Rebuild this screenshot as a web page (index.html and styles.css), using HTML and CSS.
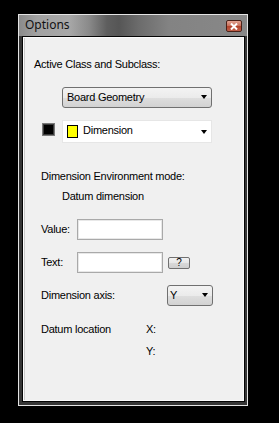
FILE: index.html
```html
<!DOCTYPE html>
<html>
<head>
<meta charset="utf-8">
<link rel="stylesheet" href="styles.css">
</head>
<body>
<div class="window">
  <div class="titlebar">
    <span class="title">Options</span>
    <span class="close"><svg width="8" height="7" viewBox="0 0 8 7"><path d="M1 0.5 L7 6.5 M7 0.5 L1 6.5" stroke="#fff" stroke-width="2"/></svg></span>
  </div>
  <div class="panel">
    <div class="content">
      <div class="label l1">Active Class and Subclass:</div>
      <div class="select select-class"><span class="sel-text">Board Geometry</span><i class="arrow"></i></div>
      <div class="row subclass-row">
        <span class="colorbox"></span>
        <div class="select select-sub"><span class="swatch"></span><span class="sub-text">Dimension</span><i class="arrow"></i></div>
      </div>
      <div class="label l2">Dimension Environment mode:</div>
      <div class="label l3">Datum dimension</div>
      <div class="row field value-row"><span class="flabel">Value:</span><span class="input"></span></div>
      <div class="row field text-row"><span class="flabel">Text:</span><span class="input"></span><span class="btn">?</span></div>
      <div class="row axis-row"><span class="alabel">Dimension axis:</span><div class="select select-axis"><span class="sel-text">Y</span><i class="arrow"></i></div></div>
      <div class="row loc-row"><span class="loclabel">Datum location</span><span>X:</span></div>
      <div class="row loc2-row"><span>Y:</span></div>
    </div>
  </div>
</div>
</body>
</html>
```
FILE: styles.css
```css
html, body {
  margin: 0;
  padding: 0;
  background: #000;
}
body {
  width: 279px;
  height: 423px;
  overflow: hidden;
  padding-top: 14px;
  box-sizing: border-box;
}
.window {
  margin-left: 18px;
  width: 230px;
  height: 392px;
  box-sizing: border-box;
  border: 1px solid #e4e4e4;
  background: #363636;
  display: flex;
  flex-direction: column;
}
.titlebar {
  height: 21px;
  flex: none;
  display: flex;
  justify-content: space-between;
  align-items: flex-start;
  padding: 0 5px 0 6px;
  background: linear-gradient(90deg, #8a8a8a 0px, #a2a2a2 18px, #a8a8a8 50px, #8a8a8a 70px, #5e5e5e 88px, #565656 100px, #6c6c6c 120px, #838383 150px, #888 100%);
}
.title {
  font-family: "Noto Sans", "Open Sans", sans-serif;
  font-size: 12px;
  line-height: 19px;
  color: #111;
}
.close {
  margin-top: 5px;
  width: 14px;
  height: 10px;
  border: 1px solid #4a2219;
  border-radius: 2px;
  background: linear-gradient(#e3a493, #c9735e 45%, #b4442c 55%, #c0604a);
  display: flex;
  align-items: center;
  justify-content: center;
}
.close svg { display: block; }
.panel {
  flex: 1;
  margin: 0 2px 3px 3px;
  border: 1px solid #050505;
  display: flex;
}
.content {
  flex: 1;
  border: 1px solid #fbfbfb;
  box-shadow: inset 1px 0 0 #c9c9c9;
  background: #f0f0f0;
  font-family: "Liberation Sans", Arial, sans-serif;
  font-size: 11px;
  letter-spacing: -0.25px;
  line-height: 13px;
  color: #000;
}
.label { height: 13px; white-space: nowrap; }
.l1 { margin-top: 20px; padding-left: 10px; }
.l2 { margin-top: 27px; padding-left: 17px; }
.l3 { margin-top: 7px; padding-left: 38px; }
.select {
  box-sizing: border-box;
  display: flex;
  align-items: center;
  justify-content: space-between;
  white-space: nowrap;
}
.arrow {
  width: 0;
  height: 0;
  border-left: 3.5px solid transparent;
  border-right: 3.5px solid transparent;
  border-top: 4px solid #000;
}
.select-class {
  margin-top: 16px;
  margin-left: 38px;
  width: 150px;
  height: 21px;
  border: 1px solid #707070;
  border-radius: 3px;
  padding: 0 4px 1px 4px;
  background: linear-gradient(#f3f3f3, #ebebeb 50%, #dedede 52%, #d2d2d2);
}
.row { display: flex; align-items: center; white-space: nowrap; }
.subclass-row {
  margin-top: 12px;
  height: 23px;
  align-items: flex-start;
  padding-left: 18px;
}
.colorbox {
  margin-top: 3px;
  width: 13px;
  height: 13px;
  box-sizing: border-box;
  border: 1px solid #7a7a7a;
  background: #000;
  box-shadow: inset 0 0 0 1px #3a3a3a;
}
.select-sub {
  margin-left: 7px;
  width: 150px;
  height: 23px;
  background: #fff;
  border: 1px solid #e6e6e6;
  padding: 0 4px 0 4px;
  justify-content: flex-start;
}
.swatch {
  width: 11px;
  height: 13px;
  box-sizing: border-box;
  border: 1px solid #000;
  background: #ffff00;
}
.sub-text { margin-left: 5px; flex: 1; padding-bottom: 2px; }
.field { height: 21px; padding-left: 17px; }
.value-row { margin-top: 16px; }
.text-row { margin-top: 12px; }
.flabel { width: 36px; }
.input {
  width: 86px;
  height: 21px;
  box-sizing: border-box;
  background: #fff;
  border: 1px solid #a9a9a9;
  box-shadow: inset 0 0 0 1px #e8e8e8;
}
.btn {
  margin-left: 5px;
  width: 22px;
  height: 12px;
  box-sizing: border-box;
  border: 1px solid #707070;
  border-radius: 2px;
  background: linear-gradient(#f2f2f2, #e6e6e6 50%, #d8d8d8 52%, #cfcfcf);
  font-size: 10px;
  line-height: 10px;
  text-align: center;
  letter-spacing: 0;
}
.axis-row { margin-top: 12px; height: 21px; padding-left: 17px; }
.alabel { width: 126px; }
.select-axis {
  width: 46px;
  height: 21px;
  border: 1px solid #707070;
  border-radius: 3px;
  padding: 0 4px 1px 2px;
  background: linear-gradient(#f3f3f3, #ebebeb 50%, #dedede 52%, #d2d2d2);
}
.loc-row { margin-top: 17px; height: 13px; padding-left: 17px; }
.loclabel { width: 105px; }
.loc2-row { margin-top: 9px; height: 13px; padding-left: 122px; }
```
